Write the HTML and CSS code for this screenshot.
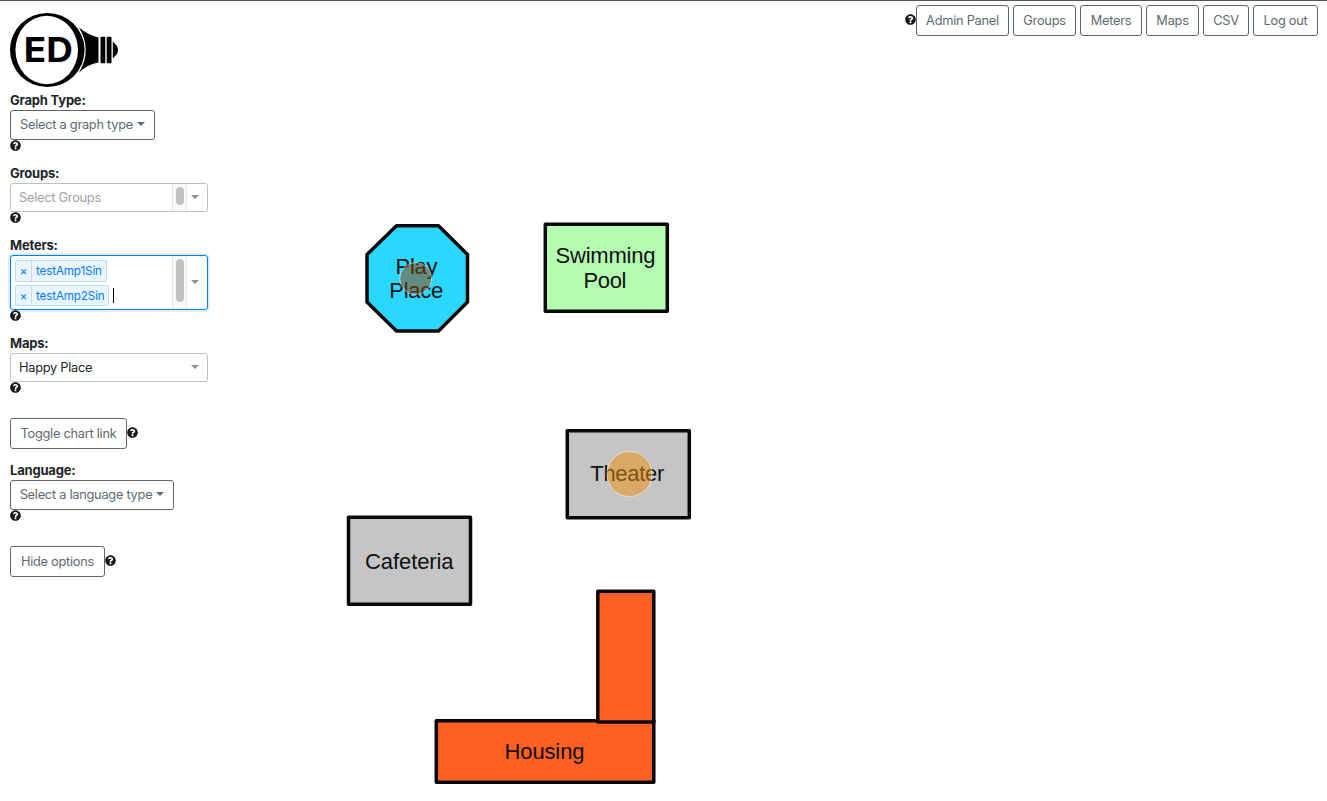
FILE: index.html
```html
<!DOCTYPE html>
<html lang="en">
<head>
<meta charset="utf-8">
<title>Open Energy Dashboard</title>
<link rel="stylesheet" href="styles.css">
</head>
<body>
<svg width="0" height="0" class="defs">
  <symbol id="help" viewBox="0 0 512 512"><path fill="currentColor" d="M504 256c0 137-111 248-248 248S8 393 8 256 119 8 256 8s248 111 248 248zM262.700 90c-54.500 0-89.300 23-116.500 63.800-3.500 5.300-2.400 12.400 2.700 16.300l34.700 26.300c5.200 3.900 12.600 3 16.700-2.100 17.900-22.700 30.100-35.800 57.300-35.800 20.400 0 45.700 13.100 45.700 33 0 15-12.400 22.700-32.500 34C247.100 238.500 216 254.900 216 296v4c0 6.600 5.400 12 12 12h56c6.600 0 12-5.400 12-12v-1.300c0-28.500 83.200-29.600 83.200-106.700 0-58-60.200-102-116.500-102zM256 338c-25.400 0-46 20.600-46 46s20.600 46 46 46 46-20.600 46-46-20.600-46-46-46z"/></symbol>
</svg>
<header class="topbar">
  <svg class="help"><use href="#help"/></svg>
  <nav class="nav">
    <button class="btn admin">Admin Panel</button>
    <button class="btn groups">Groups</button>
    <button class="btn meters">Meters</button>
    <button class="btn maps">Maps</button>
    <button class="btn csv">CSV</button>
    <button class="btn logout">Log out</button>
  </nav>
</header>
<div class="page">
  <aside class="sidebar">
    <svg class="logo" viewBox="10 13 108 74">
      <ellipse cx="47.300" cy="50" rx="37.300" ry="37"/>
      <ellipse class="glass" cx="46.700" cy="50" rx="31.300" ry="34.200"/>
      <path d="M79 27.500Q88 35 98.500 37.500V62.500Q88 64 79 72.500Q92.500 50 79 27.500Z"/>
      <rect x="100.500" y="36.700" width="4.800" height="26.600" rx="1"/>
      <rect x="106.700" y="36.700" width="4.800" height="26.600" rx="1"/>
      <path d="M112.800 41.500L117 46Q119 50 117 54L112.800 58.500Z"/>
      <text x="23.800" y="62.300" textLength="49" lengthAdjust="spacingAndGlyphs">ED</text>
    </svg>
    <section class="field">
      <h2 class="label graph-label">Graph Type:</h2>
      <button class="btn drop graph">Select a graph type<i class="caret"></i></button>
      <svg class="help"><use href="#help"/></svg>
    </section>
    <section class="field">
      <h2 class="label">Groups:</h2>
      <div class="select">
        <div class="value muted">Select Groups</div>
        <div class="scroll"><i class="thumb"></i></div>
        <div class="arrow"></div>
      </div>
      <svg class="help"><use href="#help"/></svg>
    </section>
    <section class="field">
      <h2 class="label">Meters:</h2>
      <div class="select focused">
        <div class="tags">
          <div class="tag"><b>×</b><span>testAmp1Sin</span></div>
          <div class="tagline"><div class="tag wide"><b>×</b><span>testAmp2Sin</span></div><i class="cursor"></i></div>
        </div>
        <div class="scroll"><i class="thumb"></i></div>
        <div class="arrow"></div>
      </div>
      <svg class="help"><use href="#help"/></svg>
    </section>
    <section class="field">
      <h2 class="label">Maps:</h2>
      <div class="select">
        <div class="value">Happy Place</div>
        <div class="arrow"></div>
      </div>
      <svg class="help"><use href="#help"/></svg>
    </section>
    <div class="action toggle"><button class="btn">Toggle chart link</button><svg class="help"><use href="#help"/></svg></div>
    <section class="field">
      <h2 class="label">Language:</h2>
      <button class="btn drop language">Select a language type<i class="caret"></i></button>
      <svg class="help"><use href="#help"/></svg>
    </section>
    <div class="action hide"><button class="btn">Hide options</button><svg class="help"><use href="#help"/></svg></div>
  </aside>
  <main class="map">
    <svg viewBox="218 37 1109 764">
      <g class="shape">
        <path fill="#2ad7ff" d="M396.500 225.800H438.500L467.500 254.500V302L438.500 331H396.500L367 302V254.500Z"/>
        <rect fill="#b5fcb3" x="545.300" y="224.300" width="122" height="87"/>
        <rect fill="#c5c5c5" x="567.300" y="430.800" width="122" height="87"/>
        <rect fill="#c5c5c5" x="348.500" y="517.300" width="122" height="87"/>
        <rect fill="#fc6022" x="436.300" y="720.700" width="217.500" height="61.500"/>
        <rect fill="#fc6022" x="597.800" y="591.300" width="56" height="130.700"/>
      </g>
      <g class="place">
        <text x="416.500" y="274" textLength="42">Play</text>
        <text x="416.300" y="298" textLength="54">Place</text>
        <text x="605.500" y="263" textLength="100">Swimming</text>
        <text x="605" y="288" textLength="43">Pool</text>
        <text x="627.300" y="481.300" textLength="74">Theater</text>
        <text x="409.300" y="569" textLength="88.500">Cafeteria</text>
        <text x="544.500" y="759" textLength="80">Housing</text>
      </g>
      <circle class="bubble" cx="415.700" cy="278.500" r="16" fill="#984100"/>
      <circle class="bubble" cx="629.500" cy="474" r="22.500" fill="#ed8d0b"/>
    </svg>
  </main>
</div>
</body>
</html>
```
FILE: styles.css
```css
* { box-sizing: border-box; }
body {
  margin: 0;
  height: 801px;
  overflow: hidden;
  border-top: 1px solid #555459;
  background: #fff;
  color: #212529;
  font: 13px/20px Inter, sans-serif;
}
.defs { display: none; }
svg { display: block; }
.help { width: 11px; height: 11px; flex: none; color: #17191c; }
.btn {
  display: flex;
  align-items: center;
  justify-content: center;
  height: 31px;
  padding: 0;
  border: 1px solid #5c666f;
  border-radius: 3px;
  background: #fff;
  color: #5f6971;
  font: 12.800px/20px Inter, sans-serif;
  letter-spacing: -0.260px;
  white-space: nowrap;
}
.topbar {
  display: flex;
  justify-content: flex-end;
  height: 36px;
  padding: 4px 9px 0 0;
}
.topbar .help { margin-top: 9px; }
.nav { display: flex; gap: 4px; }
.admin { width: 93px; }
.groups { width: 63px; }
.meters { width: 62px; }
.maps { width: 53px; }
.csv { width: 46px; }
.logout { width: 65px; }
.page { display: grid; grid-template-columns: 218px 1109px; }
.sidebar { margin-top: -24px; padding-left: 10px; }
.logo { width: 108px; height: 74px; margin-bottom: 3px; }
.logo .glass { fill: #fff; }
.logo text { font: 700 34px Inter, sans-serif; }
.field { width: 198px; margin-bottom: 12px; }
.label { margin: 0; font-size: 13px; line-height: 20px; font-weight: 700; letter-spacing: -0.2px; }
.drop { height: 30px; padding-bottom: 1px; }
.graph { width: 145px; }
.language { width: 164px; }
.caret {
  margin-left: 4px;
  margin-top: -2px;
  border: 4px solid transparent;
  border-top-color: currentColor;
  border-bottom: 0;
}
.select {
  display: flex;
  height: 29px;
  border: 1px solid #c1c1c1;
  border-radius: 3px;
  background: #fff;
}
.value { flex: 1; padding-left: 8px; font-size: 12.800px; line-height: 27px; letter-spacing: -0.260px; }
.muted { color: #a2a2a2; }
.scroll {
  width: 15px;
  padding: 3px 3px 6px;
  border: solid #e8e8e8;
  border-width: 0 1px;
  background: #fafafa;
}
.thumb { display: block; width: 8px; height: 100%; border-radius: 4px; background: #c1c1c1; }
.arrow { width: 20px; display: flex; align-items: center; padding-left: 4px; }
.arrow::before {
  content: "";
  margin-top: -2px;
  border: 4px solid transparent;
  border-top-color: #8f8f8f;
  border-bottom: 0;
}
.focused { height: 55px; border-color: #007eff; box-shadow: 0 0 0 2px #dceeff; }
.focused .scroll { padding-bottom: 7px; }
.tags { flex: 1; padding: 4px; display: flex; flex-direction: column; gap: 3px; }
.tagline { display: flex; align-items: center; gap: 4px; }
.tag {
  display: flex;
  width: 92px;
  height: 22px;
  border: 1px solid #bcdcff;
  border-radius: 2px;
  background: #ebf5ff;
  color: #007eff;
  font-size: 11.700px;
  line-height: 20px;
}
.tag.wide { width: 94px; height: 21px; }
.tag b { width: 16px; border-right: 1px solid #bcdcff; text-align: center; font-weight: 400; font-size: 12px; }
.tag span { flex: 1; padding-left: 4px; letter-spacing: -0.160px; white-space: nowrap; }
.cursor { width: 1px; height: 15px; background: #000; }
.action { display: flex; }
.action .help { margin-top: 9px; }
.toggle { margin: 25px 0 11px; }
.toggle .btn { width: 117px; }
.hide { margin-top: 25px; }
.hide .btn { width: 95px; }
.map svg { width: 1109px; height: 764px; }
.shape { stroke: #080808; stroke-width: 3.500px; stroke-linejoin: round; }
.place { font: 22px "Liberation Sans", sans-serif; text-anchor: middle; fill: #111; }
.bubble { fill-opacity: 0.500; stroke: #fff; stroke-opacity: 0.500; stroke-width: 1px; }
```
